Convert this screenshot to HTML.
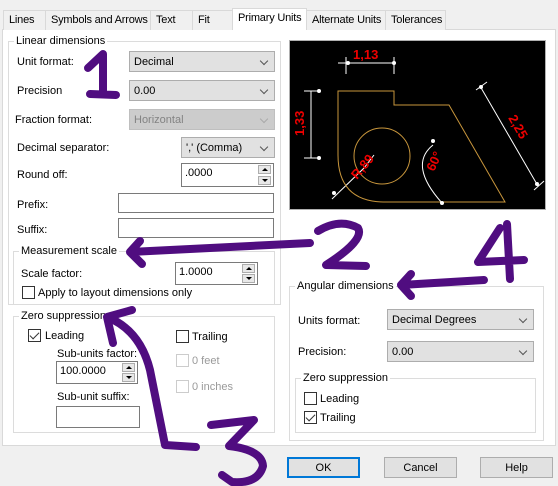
<!DOCTYPE html>
<html><head><meta charset="utf-8"><style>
*{box-sizing:border-box;margin:0;padding:0}
body{width:558px;height:486px;background:#f0f0f0;font-family:"Liberation Sans",sans-serif;font-size:11px;color:#000;position:relative;overflow:hidden}
.a{position:absolute;white-space:nowrap}
.tab{position:absolute;top:10px;height:20px;border:1px solid #d9d9d9;border-bottom:none;background:#f0f0f0;padding:3px 0 0 5px;white-space:nowrap;overflow:hidden;letter-spacing:-0.2px}
.panel{position:absolute;left:2px;top:29px;width:554px;height:417px;background:#fff;border:1px solid #d9d9d9}
.grp{position:absolute;border:1px solid #dcdcdc}
.lg{position:absolute;background:#fff;padding:0 2px;top:-7px;left:5px;line-height:12px;white-space:nowrap}
.cb{position:absolute;height:21px;background:#e1e1e1;border:1px solid #adadad;padding:4px 0 0 4px;white-space:nowrap}
.cb:after{content:"";position:absolute;right:7px;top:6px;width:5px;height:5px;border-right:1px solid #555;border-bottom:1px solid #555;transform:rotate(45deg)}
.dis{background:#cccccc;border-color:#bfbfbf;color:#838383}
.dis:after{border-color:#aaa}
.in{position:absolute;background:#fff;border:1px solid #7a7a7a}
.sp{position:absolute;background:#fff;border:1px solid #7a7a7a;padding:3px 0 0 3px}
.sp i{position:absolute;right:2px;width:13px;height:9px;border:1px solid #adadad;background:#e8e8e8}
.sp i:after{content:"";position:absolute;left:3px;border-left:3px solid transparent;border-right:3px solid transparent}
.sp i.u{top:1px}.sp i.u:after{top:2px;border-bottom:3px solid #000}
.sp i.d{bottom:1px}.sp i.d:after{top:2px;border-top:3px solid #000}
.ck{position:absolute;width:13px;height:13px;border:1px solid #333;background:#fff}
.ck.dd{border-color:#ccc}
.ck.on:after{content:"";position:absolute;left:3px;top:0px;width:4px;height:8px;border-right:1px solid #333;border-bottom:1px solid #333;transform:rotate(45deg)}
.btn{position:absolute;top:457px;width:73px;height:21px;border:1px solid #adadad;background:#e1e1e1;text-align:center;padding-top:4px}
</style></head><body>
<div class="panel"></div>
<div class="tab" style="left:3px;width:43px">Lines</div>
<div class="tab" style="left:45px;width:106px">Symbols and Arrows</div>
<div class="tab" style="left:150px;width:43px">Text</div>
<div class="tab" style="left:192px;width:41px">Fit</div>
<div class="tab" style="left:232px;top:8px;height:22px;width:75px;background:#fff">Primary Units</div>
<div class="tab" style="left:306px;width:80px">Alternate Units</div>
<div class="tab" style="left:385px;width:61px">Tolerances</div>

<div class="grp" style="left:8px;top:41px;width:273px;height:264px"><span class="lg">Linear dimensions</span></div>
<div class="a" style="left:17px;top:56px">Unit format:</div>
<div class="cb" style="left:129px;top:51px;width:146px">Decimal</div>
<div class="a" style="left:17px;top:85px">Precision</div>
<div class="cb" style="left:129px;top:80px;width:146px">0.00</div>
<div class="a" style="left:15px;top:114px">Fraction format:</div>
<div class="cb dis" style="left:129px;top:109px;width:146px">Horizontal</div>
<div class="a" style="left:17px;top:142px">Decimal separator:</div>
<div class="cb" style="left:181px;top:137px;width:94px">',' (Comma)</div>
<div class="a" style="left:17px;top:169px">Round off:</div>
<div class="sp" style="left:181px;top:163px;width:93px;height:24px">.0000<i class="u"></i><i class="d"></i></div>
<div class="a" style="left:17px;top:199px">Prefix:</div>
<div class="in" style="left:118px;top:193px;width:156px;height:20px"></div>
<div class="a" style="left:17px;top:224px">Suffix:</div>
<div class="in" style="left:118px;top:218px;width:156px;height:20px"></div>

<div class="grp" style="left:13px;top:251px;width:262px;height:54px"><span class="lg">Measurement scale</span></div>
<div class="a" style="left:21px;top:268px">Scale factor:</div>
<div class="sp" style="left:175px;top:262px;width:83px;height:23px">1.0000<i class="u"></i><i class="d"></i></div>
<div class="ck" style="left:22px;top:286px"></div>
<div class="a" style="left:38px;top:287px">Apply to layout dimensions only</div>

<div class="grp" style="left:13px;top:316px;width:262px;height:117px"><span class="lg">Zero suppression</span></div>
<div class="ck on" style="left:28px;top:329px"></div>
<div class="a" style="left:45px;top:330px">Leading</div>
<div class="ck" style="left:176px;top:330px"></div>
<div class="a" style="left:192px;top:331px">Trailing</div>
<div class="a" style="left:57px;top:348px">Sub-units factor:</div>
<div class="sp" style="left:56px;top:361px;width:82px;height:23px">100.0000<i class="u"></i><i class="d"></i></div>
<div class="ck dd" style="left:176px;top:354px"></div>
<div class="a" style="left:192px;top:355px;color:#9a9a9a">0 feet</div>
<div class="ck dd" style="left:176px;top:380px"></div>
<div class="a" style="left:192px;top:381px;color:#9a9a9a">0 inches</div>
<div class="a" style="left:57px;top:391px">Sub-unit suffix:</div>
<div class="in" style="left:56px;top:406px;width:84px;height:22px"></div>

<svg class="a" style="left:289px;top:40px" width="257" height="170" viewBox="289 40 257 170">
<rect x="289" y="40" width="257" height="170" fill="#000" stroke="#b0b0b0" stroke-width="2"/>
<g stroke="#fff" stroke-width="1" fill="none">
<path d="M338 63H396M346 57V74M394 57V74M311 91V158M304 91H321M304 158H321M480 86L538 186M476 90L487 82M534 190L544 181M374 155L364 168L332 199M433 145Q408 165 442 203" />
</g>
<g stroke="#c8963c" fill="none"><path d="M338 91H394V105H449L505 202H385Q338 202 338 155Z"/><circle cx="382" cy="156" r="28"/></g>
<g fill="#fff"><circle cx="319" cy="91" r="2"/><circle cx="319" cy="158" r="2"/><circle cx="348" cy="63" r="2"/><circle cx="394" cy="63" r="2"/><circle cx="481" cy="87" r="2"/><circle cx="537" cy="184" r="2"/><circle cx="334" cy="193" r="2"/><circle cx="433" cy="141" r="2"/><circle cx="442" cy="203" r="2"/></g>
<g fill="#e00" font-weight="bold" font-size="13" font-family="Liberation Sans">
<text x="353" y="59">1,13</text>
<text transform="translate(304,136) rotate(-90)">1,33</text>
<text transform="translate(508,118) rotate(60)">2,25</text>
<text transform="translate(357,180) rotate(-50)">R,89</text>
<text transform="translate(434,172) rotate(-65)">60°</text>
</g></svg>

<div class="grp" style="left:289px;top:286px;width:255px;height:155px"><span class="lg">Angular dimensions</span></div>
<div class="a" style="left:298px;top:315px">Units format:</div>
<div class="cb" style="left:387px;top:309px;width:147px">Decimal Degrees</div>
<div class="a" style="left:298px;top:346px">Precision:</div>
<div class="cb" style="left:387px;top:341px;width:147px">0.00</div>
<div class="grp" style="left:295px;top:378px;width:241px;height:55px"><span class="lg">Zero suppression</span></div>
<div class="ck" style="left:304px;top:392px"></div>
<div class="a" style="left:320px;top:393px">Leading</div>
<div class="ck on" style="left:304px;top:411px"></div>
<div class="a" style="left:320px;top:412px">Trailing</div>

<div class="btn" style="left:287px;border:2px solid #0078d7;padding-top:3px">OK</div>
<div class="btn" style="left:384px">Cancel</div>
<div class="btn" style="left:480px">Help</div>

<svg class="a" style="left:0;top:0" width="558" height="486">
<g stroke="#500d80" stroke-width="8" fill="none" stroke-linecap="round" stroke-linejoin="round">
<path d="M88 68L103 54V93M90 94L116 95"/>
<path d="M318 231Q340 218 358 228Q365 240 326 265L366 266M310 243L130 252M130 252L140 241M130 252L142 264"/>
<path d="M500 228L478 262L524 260M507 224L510 279M484 280L401 285M401 285L411 274M401 285L411 296"/>
<path d="M107 317Q140 330 150 370Q158 410 165 445L196 447M107 317L132 310M107 317L113 343"/>
<path d="M211 425L254 420L229 446Q262 450 263 466Q258 484 232 482L222 475"/>
</g></svg>
</body></html>
